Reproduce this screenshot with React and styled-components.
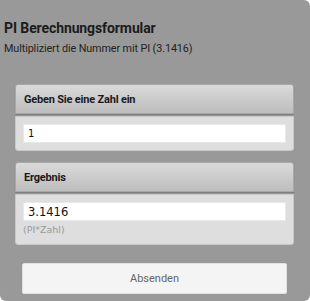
import React from "react";
import styled, { createGlobalStyle } from "styled-components";

const Global = createGlobalStyle`
  html, body { margin: 0; padding: 0; background: #ffffff; }
  * { box-sizing: border-box; }
`;

const Page = styled.div`
  width: 310px;
  height: 301px;
  background: #999999;
  border-radius: 0 6px 6px 6px;
  padding: 20px 0 0 0;
  font-family: "Roboto", "Liberation Sans", sans-serif;
  color: #1c1c1c;
  display: flex;
  flex-direction: column;
`;

const Title = styled.h1`
  margin: 0 0 0 4px;
  font-size: 14px;
  line-height: 17px;
  font-weight: 700;
  letter-spacing: -0.1px;
`;

const Subtitle = styled.p`
  margin: 5px 0 0 4px;
  font-size: 10.8px;
  line-height: 13px;
  letter-spacing: -0.1px;
  color: #222;
`;

const Form = styled.div`
  margin: 29px 16px 0 15px;
  display: flex;
  flex-direction: column;
  gap: 11px;
`;

const Section = styled.div`
  display: flex;
  flex-direction: column;
  gap: 2px;
`;

const Header = styled.div`
  height: 30px;
  display: flex;
  align-items: center;
  padding-left: 8px;
  background: linear-gradient(#dadada, #bdbdbd);
  border: 1px solid #a8a8a8;
  border-radius: 3px 3px 0 0;
  box-shadow: 0 1px 1px rgba(0,0,0,0.2);
  font-size: 11px;
  font-weight: 700;
  letter-spacing: -0.2px;
  color: #1a1a1a;
`;

const Body = styled.div`
  background: #dedede;
  border: 1px solid #c8c8c8;
  border-radius: 0 0 3px 3px;
  padding: ${(p) => p.$pad};
`;

const Input = styled.input`
  display: block;
  width: 100%;
  height: 19px;
  border: 1px solid #e8e8e8;
  background: #ffffff;
  padding: 0 4px;
  font-family: "DejaVu Sans", "Verdana", sans-serif;
  font-size: ${(p) => p.$size};
  color: #111;
  outline: none;
`;

const Hint = styled.div`
  margin-top: 3px;
  font-family: "DejaVu Sans", sans-serif;
  font-size: 9.5px;
  color: #9a9a9a;
`;

const ButtonRow = styled.div`
  margin: 18px 23px 0 22px;
`;

const Button = styled.button`
  width: 100%;
  height: 31px;
  background: #f4f4f4;
  border: 1px solid #e0e0e0;
  border-radius: 2px;
  font-family: "Roboto", "Liberation Sans", sans-serif;
  font-size: 11px;
  color: #666;
  cursor: pointer;
`;

export default function App() {
  return (
    <>
      <Global />
      <Page>
        <Title>PI Berechnungsformular</Title>
        <Subtitle>Multipliziert die Nummer mit PI (3.1416)</Subtitle>
        <Form>
          <Section>
            <Header>Geben Sie eine Zahl ein</Header>
            <Body $pad="7px 7px 7px 7px">
              <Input $size="10px" defaultValue="1" />
            </Body>
          </Section>
          <Section>
            <Header>Ergebnis</Header>
            <Body $pad="7px 7px 9px 7px">
              <Input $size="11.5px" defaultValue="3.1416" readOnly />
              <Hint>(PI*Zahl)</Hint>
            </Body>
          </Section>
        </Form>
        <ButtonRow>
          <Button>Absenden</Button>
        </ButtonRow>
      </Page>
    </>
  );
}
